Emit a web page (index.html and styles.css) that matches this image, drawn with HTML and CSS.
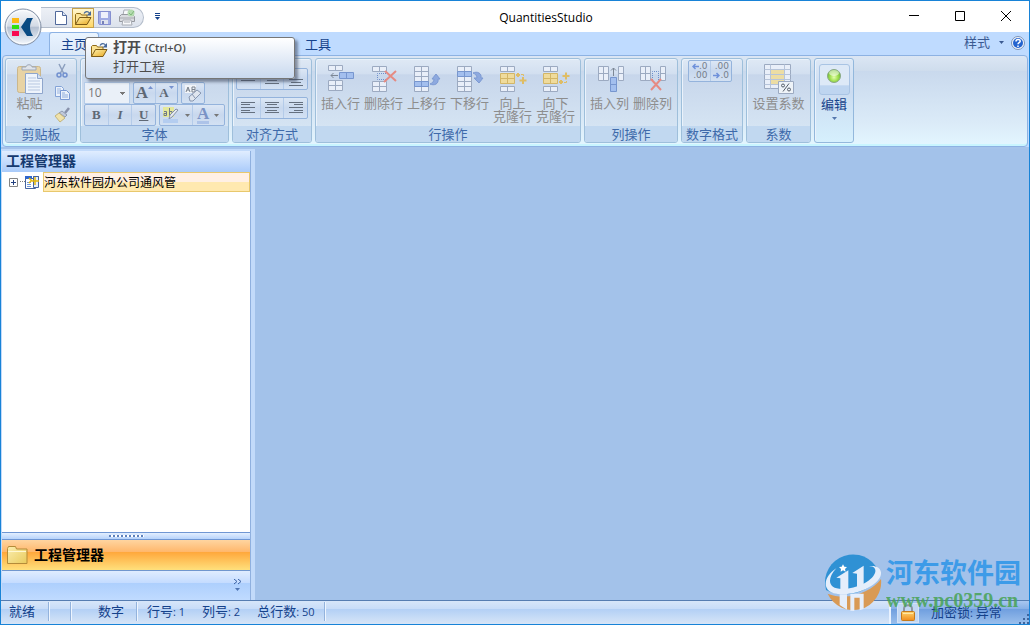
FILE: index.html
```html
<!DOCTYPE html>
<html lang="zh-CN">
<head>
<meta charset="utf-8">
<title>QuantitiesStudio</title>
<link rel="stylesheet" href="styles.css">
</head>
<body>
<svg class="defs" aria-hidden="true">
  <defs>
    <linearGradient id="folder" x1="0" y1="0" x2="1" y2="1"><stop offset="0" stop-color="#fff3b0"/><stop offset="1" stop-color="#e8a820"/></linearGradient>
    <linearGradient id="orb" x1="0" y1="0" x2="0" y2="1"><stop offset="0" stop-color="#f8fafc"/><stop offset=".48" stop-color="#d3dae5"/><stop offset=".5" stop-color="#b3bfd1"/><stop offset="1" stop-color="#f4f8fd"/></linearGradient>
    <radialGradient id="green" cx=".5" cy=".6" r=".6"><stop offset="0" stop-color="#e4ffae"/><stop offset=".5" stop-color="#a2e052"/><stop offset="1" stop-color="#61b324"/></radialGradient>
    <linearGradient id="gold" x1="0" y1="0" x2="0" y2="1"><stop offset="0" stop-color="#ffd56e"/><stop offset="1" stop-color="#f08c1c"/></linearGradient>
    <linearGradient id="big-folder" x1="0" y1="0" x2="1" y2="1"><stop offset="0" stop-color="#fbeeb0"/><stop offset="1" stop-color="#e9cb5c"/></linearGradient>
    <symbol id="open" viewBox="0 0 18 16">
      <path d="M1.500 14.500v-10l1-1h4l1 1.500h5.500v3" fill="#fbe394" stroke="#8f6a18"/>
      <path d="M1.500 14.500l4-7h11.500l-4 7z" fill="url(#folder)" stroke="#7c5a14"/>
      <path d="M10 3.500c1.500-2.500 4-2.500 5.500-.5" fill="none" stroke="#44679a" stroke-width="1.200"/>
      <path d="M17 1v4.500h-4.500z" fill="#44679a"/>
    </symbol>
    <symbol id="caret" viewBox="0 0 5 3"><path d="M0 0h5L2.500 3z" fill="currentColor"/></symbol>
  </defs>
</svg>

<div class="window">
  <header class="titlebar">
    <div class="quick">
      <div class="quick-bar">
        <button class="quick-btn" aria-label="新建"><svg width="14" height="16"><path d="M1.500 1.500h7l4 4v9h-11z" fill="#fff" stroke="#51699b"/><path d="M8.500 1.500v4h4" fill="#dce6f5" stroke="#51699b"/></svg></button>
        <button class="quick-btn active" aria-label="打开"><svg width="18" height="16"><use href="#open"/></svg></button>
        <button class="quick-btn" aria-label="保存"><svg width="16" height="16"><path d="M1.500 1.500h12v13h-11l-1-1z" fill="#a0abe3" stroke="#858fd0"/><path d="M4 2h7v6H4z" fill="#eef1fb"/><path d="M4 10h7v4H4z" fill="#dfe3ee"/><path d="M5 11h2v3H5z" fill="#7781b8"/></svg></button>
        <button class="quick-btn" aria-label="打印"><svg width="18" height="17"><path d="M5 6l1-5h6l1 5" fill="#f7f8fa" stroke="#a8acb4"/><path d="M1.500 7.500l2-2h11l2 2v5h-15z" fill="#d9dbe0" stroke="#96999f"/><path d="M2 9h14" stroke="#a6a9af"/><path d="M5 11h8l1 5H4z" fill="#f8f9fb" stroke="#a8acb4"/><path d="M6 13h6" stroke="#a8acb4"/><circle cx="13" cy="4" r="3.500" fill="#b4dbb0"/><path d="M11 4l2 2 3-4" fill="none" stroke="#7fb87c"/></svg></button>
      </div>
      <button class="quick-more" aria-label="自定义快速访问工具栏"><svg width="7" height="8"><path d="M1 .5h5M1 2.500h5" stroke="#15428b"/><path d="M1 4h5L3.500 7z" fill="#15428b"/></svg></button>
    </div>
    <h1 class="app-title">QuantitiesStudio</h1>
    <div class="controls">
      <button aria-label="最小化"><svg width="12" height="12"><path d="M1 4.500h10" stroke="#000"/></svg></button>
      <button aria-label="最大化"><svg width="12" height="12"><path d="M1.500.500h9v9h-9z" fill="none" stroke="#000"/></svg></button>
      <button aria-label="关闭"><svg width="12" height="12"><path d="M1 0l10 10M11 0L1 10" stroke="#000"/></svg></button>
    </div>
  </header>

  <nav class="tabs">
    <button class="tab selected">主页</button>
    <button class="tab">工具</button>
    <button class="style-menu">样式 <svg width="5" height="3"><use href="#caret"/></svg></button>
    <button class="help" aria-label="帮助"><svg width="14" height="14"><circle cx="7" cy="7" r="6.500" fill="#f2f6fc" stroke="#7c93b8"/><circle cx="7" cy="7" r="5" fill="#2463cf"/><path d="M5 5.500c0-2.600 4.200-2.600 4.200-.3C9.200 6.700 7 6.500 7 8.300M7 9.500v1.500" fill="none" stroke="#fff" stroke-width="1.500"/></svg></button>
  </nav>

  <section class="ribbon">
    <div class="group clipboard">
      <div class="tools">
        <button class="large">
          <svg width="28" height="30"><rect x="1.500" y="2.500" width="23" height="26" rx="2" fill="#e8d3a4" stroke="#cbb78c"/><path d="M6 6V3h4c0-3 6-3 6 0h4v3z" fill="#dfe3ea" stroke="#9ca7b8"/><path d="M9.500 9.500h12l5 5v15h-17z" fill="#eef4fc" stroke="#8fa6cc"/><path d="M21.500 9.500v5h5" fill="#d2dff2" stroke="#8fa6cc"/><path d="M12 14h8M12 17h12M12 20h12M12 23h12M12 26h12" stroke="#b7c7e1"/></svg>
          <span>粘贴</span><svg class="drop" width="5" height="3"><use href="#caret"/></svg>
        </button>
        <div class="small-stack">
          <button aria-label="剪切"><svg width="16" height="16"><path d="M5 1l5 10M11 1L6 11" stroke="#8d9fbe" stroke-width="1.500"/><circle cx="5" cy="12" r="2" fill="none" stroke="#7190cf" stroke-width="1.500"/><circle cx="11" cy="12" r="2" fill="none" stroke="#7190cf" stroke-width="1.500"/></svg></button>
          <button aria-label="复制"><svg width="16" height="16"><path d="M1.500 1.500h6l2 2v8h-8z" fill="#eaf1fb" stroke="#84a3d7"/><path d="M3 4h4M3 6h4M3 8h4" stroke="#9bb5df"/><path d="M6.500 5.500h6l3 3v6h-9z" fill="#eaf1fb" stroke="#7898d4"/><path d="M8 8h3M8 10h6M8 12h6" stroke="#8eabdc"/></svg></button>
          <button aria-label="格式刷"><svg width="16" height="16"><path d="M15 1l-4 5" stroke="#8892ac" stroke-width="2.500"/><path d="M8 4l5 4-2 2-6-4z" fill="#c0c9da" stroke="#8e9ab2"/><path d="M5 6l6 5-5 4-5-6z" fill="#f0e2a9" stroke="#c3b47c"/></svg></button>
        </div>
      </div>
      <h2>剪贴板</h2>
    </div>

    <div class="group font-group">
      <div class="tools rows">
        <div class="row">
          <select class="size" aria-label="字号"><option>10</option></select>
          <div class="btns"><button aria-label="增大字号"><b class="letter big">A</b><svg width="5" height="3"><path d="M0 3h5L2.500 0z" fill="#7792cf"/></svg></button><button aria-label="减小字号"><b class="letter">A</b><svg width="5" height="3"><path d="M0 0h5L2.500 3z" fill="#7792cf"/></svg></button></div>
          <div class="btns"><button aria-label="清除格式"><svg width="18" height="18"><rect x="1" y="1" width="11" height="8" fill="#f1f4f8"/><path d="M2 8l2-5 2 5M3 6h2M8 8V3h3v5H8M8 5.500h3" fill="none" stroke="#7a828d"/><path d="M5 13l8-7 4 3-8 8H6z" fill="#dfe5ee" stroke="#8796b0"/><path d="M8 10l3 4" stroke="#8796b0"/></svg></button></div>
        </div>
        <div class="row format">
          <div class="btns"><button><b>B</b></button><button><b><i>I</i></b></button><button><b><u>U</u></b></button></div>
          <div class="btns colors"><button aria-label="突出显示"><svg width="18" height="18"><rect x="1" y="1" width="11" height="10" fill="#e4e89a"/><path d="M2 5.500h2.500v4H2v-2h2.500M7.500 2v7.500H10v-4H7.500" fill="none" stroke="#6e7888"/><path d="M16 4l-6 7-3 2 1-4 6-6z" fill="#e6eaf0" stroke="#8591a7"/><path d="M1 15h15" stroke="#b4cdf0" stroke-width="4"/></svg><svg width="5" height="3"><use href="#caret"/></svg></button><button aria-label="字体颜色"><b class="letter blue">A</b><svg width="5" height="3"><use href="#caret"/></svg></button></div>
        </div>
      </div>
      <h2>字体</h2>
    </div>

    <div class="group align-group">
      <div class="tools rows">
        <div class="btns"><button aria-label="顶端对齐"><svg width="14" height="14"><path d="M0 2.500h14M2 5.500h10M0 8.500h14" stroke="#65707f"/></svg></button><button aria-label="垂直居中"><svg width="14" height="14"><path d="M0 5.500h14M2 8.500h10M0 11.500h14" stroke="#65707f"/></svg></button><button aria-label="底端对齐"><svg width="14" height="14"><path d="M0 7.500h14M2 10.500h10M0 13.500h14" stroke="#65707f"/></svg></button></div>
        <div class="btns"><button aria-label="左对齐"><svg width="14" height="14"><path d="M0 1.500h14M0 3.500h9M0 6.500h14M0 9.500h9M0 11.500h14" stroke="#65707f"/></svg></button><button aria-label="居中"><svg width="14" height="14"><path d="M0 1.500h14M2 3.500h10M0 6.500h14M2 9.500h10M0 11.500h14" stroke="#65707f"/></svg></button><button aria-label="右对齐"><svg width="14" height="14"><path d="M0 1.500h14M5 3.500h9M0 6.500h14M5 9.500h9M0 11.500h14" stroke="#65707f"/></svg></button></div>
      </div>
      <h2>对齐方式</h2>
    </div>

    <div class="group row-group">
      <div class="tools">
        <button class="large"><svg class="grid" width="28" height="30"><path d="M1.500 1.500h14v5h-14zM8.500 1.500v5M1.500 16.500h14v10h-14zM8.500 16.500v10M1.500 21.500h14"/><path class="fill-blue" d="M12.500 8.500h14v6h-14zM19.500 8.500v6"/><path class="arrow" d="M11 11.500H4M6.500 9L4 11.500 6.500 14"/></svg><span>插入行</span></button>
        <button class="large"><svg class="grid" width="28" height="30"><path d="M2.500 2.500h14v5h-14zM9.500 2.500v5M2.500 17.500h14v10h-14zM9.500 17.500v10M2.500 22.500h14"/><path class="dotted" d="M16 9.500H7.500v6H16"/><path class="cross" d="M15 7l11 10M26 7L14 18"/></svg><span>删除行</span></button>
        <button class="large"><svg class="grid" width="28" height="30"><path d="M1.500 2.500h14v25h-14zM8.500 2.500v25M1.500 7.500h14M1.500 12.500h14M1.500 22.500h14"/><path class="fill-blue" d="M1.500 17.500h14v5h-14zM8.500 17.500v5"/><path class="curve" d="M17 20c4 2 9 0 8-5h2l-4-5-4 5h2c0 3-2 4-4 5z"/></svg><span>上移行</span></button>
        <button class="large"><svg class="grid" width="28" height="30"><path d="M1.500 2.500h14v25h-14zM8.500 2.500v25M1.500 12.500h14M1.500 17.500h14M1.500 22.500h14"/><path class="fill-blue" d="M1.500 7.500h14v5h-14zM8.500 7.500v5"/><path class="curve" d="M17 9c4-2 9 0 8 5h2l-4 5-5-5h3c0-3-2-4-4-5z"/></svg><span>下移行</span></button>
        <button class="large"><svg class="grid" width="28" height="30"><path d="M1.500 2.500h14v5h-14zM8.500 2.500v5M1.500 22.500h14v5h-14zM8.500 22.500v5"/><path class="fill-gold" d="M1.500 9.500h14v10h-14zM8.500 9.500v10M1.500 14.500h14"/><path class="plus" d="M17 11h4M19 9v4M24 13v7M20.500 16.500h7"/><path class="link" d="M22 10.500h2.500V12"/></svg><span>向上<br>克隆行</span></button>
        <button class="large"><svg class="grid" width="28" height="30"><path d="M1.500 2.500h14v5h-14zM8.500 2.500v5M1.500 22.500h14v5h-14zM8.500 22.500v5"/><path class="fill-gold" d="M1.500 9.500h14v10h-14zM8.500 9.500v10M1.500 14.500h14"/><path class="plus" d="M17 18h4M19 16v4M24 8.500v7M20.500 12h7"/><path class="link" d="M22 18.500h2.500V17"/></svg><span>向下<br>克隆行</span></button>
      </div>
      <h2>行操作</h2>
    </div>

    <div class="group column-group">
      <div class="tools">
        <button class="large"><svg class="grid" width="28" height="30"><path d="M2.500 2.500h10v14h-10zM7.500 2.500v14M2.500 9.500h10M22.500 2.500h5v14h-5zM22.500 9.500h5"/><path class="fill-blue" d="M14.500 13.500h6v14h-6zM14.500 20.500h6"/><path class="arrow" d="M17.500 12V4M15 6.500L17.500 4 20 6.500"/></svg><span>插入列</span></button>
        <button class="large"><svg class="grid" width="28" height="30"><path d="M1.500 2.500h10v14h-10zM6.500 2.500v14M1.500 9.500h10M21.500 2.500h5v14h-5zM21.500 9.500h5"/><path class="dotted" d="M13.500 16V7.500h6V16"/><path class="cross" d="M12 15l10 11M22 15L12 26"/></svg><span>删除列</span></button>
      </div>
      <h2>列操作</h2>
    </div>

    <div class="group number-group">
      <div class="tools rows">
        <div class="btns"><button class="digits" aria-label="增加小数位数"><span><svg width="7" height="7"><path d="M7 3.500H1M3.500 1L1 3.500 3.500 6" fill="none" stroke="#6f91da" stroke-width="1.500"/></svg>.0</span><span>.00</span></button><button class="digits" aria-label="减少小数位数"><span>.00</span><span><svg width="7" height="7"><path d="M0 3.500h6M3.500 1L6 3.500 3.500 6" fill="none" stroke="#6f91da" stroke-width="1.500"/></svg>.0</span></button></div>
      </div>
      <h2>数字格式</h2>
    </div>

    <div class="group factor-group">
      <div class="tools">
        <button class="large"><svg class="grid" width="30" height="30"><path d="M.5.500h26v24H.5z"/><path d="M7 5h13v15H7z" fill="#ecdda4" stroke="none"/><path d="M6.500.500v24M20.500.500v24M.5 5.500h26M.5 10.500h26M.5 15.500h26M.5 20.500h26" stroke="#b6c4da"/><path d="M14.500 17.500h15v12h-15z" fill="#eef3f8"/><path d="M25 19.500l-6 8" stroke="#555d68"/><circle cx="19" cy="21.500" r="1.500" fill="none" stroke="#555d68"/><circle cx="25" cy="25.500" r="1.500" fill="none" stroke="#555d68"/></svg><span>设置系数</span></button>
      </div>
      <h2>系数</h2>
    </div>

    <div class="group edit-group">
      <button class="large enabled"><span class="orb-box"><svg width="16" height="16"><circle cx="8" cy="8" r="6.500" fill="url(#green)" stroke="#8ba889"/><ellipse cx="8" cy="5" rx="5" ry="3" fill="#fff" opacity=".55"/></svg></span><span>编辑</span><svg class="drop" width="5" height="3"><use href="#caret"/></svg></button>
    </div>
  </section>

  <div class="workspace">
    <aside class="sidebar">
      <h2 class="panel-title">工程管理器</h2>
      <div class="tree">
        <div class="node">
          <button class="expander" aria-label="展开"><svg width="9" height="9"><path d="M.5.500h8v8h-8z" fill="#fff" stroke="#848484"/><path d="M2 4.500h5M4.500 2v5" stroke="#24417f"/></svg></button>
          <svg width="6" height="2"><path d="M1 .5h5" stroke="#808080" stroke-dasharray="1 1"/></svg>
          <svg width="15" height="14"><path d="M.5 3.500h10v10H.5z" fill="#fff" stroke="#44639f"/><path d="M0 1h7v3H0zM8 1h6v2H8z" fill="#2f66cc"/><path d="M8.500 1.500h5v11h-5z" fill="#e7f0fc" stroke="#44639f"/><path d="M2 7.500h4M2 9.500h4M2 11.500h4" stroke="#6e96d8"/><path d="M10 2v8M7 6h7M4 3l3 3M4 8l3-3" stroke="#e3b60c" stroke-width="1.500"/></svg>
          <a href="#project" class="node-name">河东软件园办公司通风管</a>
        </div>
      </div>
      <div class="grip"><i></i></div>
      <button class="nav-item"><svg width="22" height="20"><path d="M1.500 18.500V3.500l1-2h7l1 2.500h10.500v14.500z" fill="url(#big-folder)" stroke="#b48b39"/><path d="M2 6.500h18" stroke="#fff8d2"/></svg>工程管理器</button>
      <div class="nav-foot"><button aria-label="配置按钮"><svg width="9" height="14"><path d="M1 0l3 2.500L1 5M5 0l3 2.500L5 5" fill="none" stroke="#3a62a4"/><path d="M2 9h5l-2.500 3z" fill="#5075b2"/></svg></button></div>
    </aside>
    <main class="canvas"></main>
  </div>

  <footer class="status">
    <span class="cell ready">就绪</span><span class="cell blank"></span><span class="cell mode">数字</span>
    <span class="cell counts"><span>行号<small>: 1</small></span><span>列号<small>: 2</small></span><span>总行数<small>: 50</small></span></span>
    <span class="lock">
      <span class="lock-icon"><svg width="16" height="17"><path d="M4 8V5c0-5 8-5 8 0v3" fill="none" stroke="#8b95a4" stroke-width="2"/><rect x="1.500" y="7.500" width="13" height="9" rx="1" fill="url(#gold)" stroke="#c57a1c"/><path d="M3 9.500h10" stroke="#ffe6a3"/></svg></span>
      <span>加密锁<small>: </small>异常</span>
      <svg class="resize" width="11" height="11"><path d="M9 1h2v2H9zM5 5h2v2H5zM9 5h2v2H9zM1 9h2v2H1zM5 9h2v2H5zM9 9h2v2H9z" fill="#40659c"/></svg>
    </span>
  </footer>

  <button class="app-button" aria-label="应用程序菜单"><svg width="38" height="38"><circle cx="19" cy="19" r="18" fill="url(#orb)" stroke="#8390a5"/><circle cx="19" cy="19" r="16.500" fill="none" stroke="#fff" opacity=".7"/><path d="M8 10h7v5H8z" fill="#fdb813"/><path d="M8 17h7v4H8z" fill="#2edf12"/><path d="M8 23h7v5H8z" fill="#f8084f"/><path d="M23 10h6c-4 6-4 12 0 18h-6l-6-9z" fill="#0a4a82"/></svg></button>

  <div class="tooltip" role="tooltip">
    <svg width="18" height="16"><use href="#open"/></svg>
    <div><strong>打开 <small>(Ctrl+O)</small></strong><p>打开工程</p></div>
  </div>

  <div class="watermark">
    <svg width="58" height="58" viewBox="-3 -3 174 174">
      <path d="M0 84a84 84 0 0 1 165-24C140 110 60 135 3 105z" fill="#2f91d4"/>
      <path d="M8 116C70 140 140 110 168 72A84 84 0 0 1 8 116z" fill="#d99a55"/>
      <path d="M34 40C-10 68-12 118 50 118 110 118 172 82 168 52c-2-16-20-22-36-18 16-1 22 8 18 20-10 26-56 46-94 48-48 2-52-30-22-62z" fill="#e5eefb"/>
      <path d="M34 68l36-22v62H46V70zM82 54l34-22v58l-20 8V56zM44 118h22v46l-22-14zM76 116h40v46l-12 4v-38H88v40l-12-1z" fill="#e5eefb"/>
      <path d="M54 28l4 7 8 1-6 6 2 8-8-4-7 4 1-8-6-6 8-1z" fill="#fff"/>
    </svg>
    <div><strong>河东软件园</strong><span>www.pc0359.cn</span></div>
  </div>
</div>
</body>
</html>
```
FILE: styles.css
```css
* { box-sizing: border-box; }
body { margin: 0; font: 13px/16px "Open Sans", "Noto Sans CJK SC", sans-serif; color: #15428b; }
h1, h2, p { margin: 0; font-weight: 400; }
button { padding: 0; border: 0; background: none; color: inherit; font: inherit; }
svg { display: block; flex: none; }
.defs { position: absolute; width: 0; height: 0; }

.window { position: relative; display: flex; flex-direction: column; min-height: 100vh; border: 1px solid #1883d7; background: #bfdbff; overflow: hidden; }

.titlebar { display: grid; grid-template-columns: 200px 1fr 138px; align-items: center; height: 31px; background: #fff; }
.quick { display: flex; align-items: center; gap: 10px; padding-left: 40px; }
.quick-bar { display: flex; align-items: center; padding: 0 5px 0 9px; height: 21px; margin-top: 2px; border: 1px solid #b3bcca; border-left: 0; border-radius: 0 11px 11px 0; background: linear-gradient(#edf0f6, #dce2ec); }
.quick-btn { display: grid; place-items: center; width: 22px; height: 20px; }
.quick-btn.active { border: 1px solid #c4a04a; background: linear-gradient(#fff6cf, #ffd766); }
.app-title { font-size: 12px; color: #000; padding-top: 2px; text-align: center; }
.controls { display: flex; justify-content: flex-end; }
.controls button { display: grid; place-items: center; width: 46px; height: 28px; }

.tabs { display: flex; align-items: center; height: 23px; padding: 0 4px 0 48px; }
.tab { height: 23px; width: 50px; margin-right: 194px; }
.tab + .tab { margin-right: auto; }
.tab.selected { align-self: flex-start; border: 1px solid #8db2e3; border-bottom: 0; border-radius: 3px 3px 0 0; background: linear-gradient(#eaf4ff, #dbe8f7); }
.style-menu { display: flex; align-items: center; gap: 9px; padding-bottom: 3px; margin-right: 7px; color: #3b5a92; }
.help { padding-bottom: 2px; }

.ribbon { display: flex; gap: 3px; height: 92px; margin: 0 1px; padding: 3px 2px 4px; border: 1px solid #8db2e3; border-radius: 4px; background: linear-gradient(#dbe6f4, #cfdded 16%, #c9d9ed 17%, #dbebf8 75%, #e3f6ff); color: #8d8d8d; box-shadow: inset 0 -2px #c9f5ff; }
.group { display: flex; flex-direction: column; height: 85px; margin-top: -1px; border: 1px solid #9ebfdb; border-radius: 3px; background: linear-gradient(#dfe9f5, #d2dff0 18%, #c7d6eb 19%, #d9e8f5); box-shadow: inset 1px 1px #eaf2fb; overflow: hidden; }
.group h2 { margin-top: auto; height: 16px; font-size: 13px; line-height: 16px; text-align: center; background: #c1d8f0; color: #3e6aaa; white-space: nowrap; }
.tools { display: flex; padding: 0 3px; }
.clipboard .tools { padding: 0 3px 0 2px; }
.clipboard { width: 72px; }
.font-group { width: 149px; }
.align-group { width: 80px; }
.row-group { width: 266px; }
.column-group { width: 94px; }
.number-group { width: 62px; }
.factor-group { width: 65px; }
.edit-group { width: 40px; }

.large { display: flex; flex-direction: column; align-items: center; width: 43px; padding-top: 5px; line-height: 13px; white-space: nowrap; }
.large > span { margin-top: 3px; text-align: center; }
.large .drop { margin-top: 6px; color: #777; }
.factor-group .large { width: 100%; }
.small-stack { display: flex; flex-direction: column; padding-top: 1px; }
.small-stack button { display: grid; place-items: center; width: 22px; height: 22px; }
.edit-group { border-color: #93b8dc; background: linear-gradient(#dce8f6, #cbdcf1 40%, #d6f0fd); }
.edit-group .large { width: 100%; color: #15428b; }
.edit-group .drop { color: #5577ad; }
.edit-group .orb-box { display: grid; place-items: start center; width: 31px; height: 31px; margin: 0; padding-top: 3px; border: 1px solid #a9c4e4; border-radius: 3px; background: linear-gradient(#dde9f7 70%, #bed5f0 71%); }

.grid { fill: #e9eff9; stroke: #9caac1; }
.grid .fill-blue { fill: #a3bfee; stroke: #7796cf; }
.grid .fill-gold { fill: #efdb9c; stroke: #d3b667; }
.grid .arrow { fill: none; stroke: #7c8795; stroke-width: 1; }
.grid .dotted { fill: none; stroke: #6e8fca; stroke-dasharray: 1 1; }
.grid .cross { fill: none; stroke: #e58b83; stroke-width: 2; }
.grid .curve { fill: #8da9df; stroke: #7d9ad3; }
.grid .plus { fill: none; stroke: #dfbd65; stroke-width: 2; }
.grid .link { fill: none; stroke: #dfbd65; }

.rows { flex-direction: column; }
.row { display: flex; gap: 3px; }
.btns { display: flex; height: 22px; border: 1px solid #94b3dc; border-radius: 2px; background: linear-gradient(#dce7f5, #c8d8ee 50%, #d3e1f3); }
.btns button { flex: 1; display: flex; align-items: center; justify-content: center; }
.btns button + button { border-left: 1px solid #b4cbe9; }
.font-group .tools { padding-top: 23px; }
.size { width: 46px; height: 22px; padding: 0 3px; border: 1px solid #b5cce9; border-radius: 0; appearance: none; color: #777; font: inherit; font-size: 12px; background: linear-gradient(#777, #777) 35px 9px / 5px 1px no-repeat, linear-gradient(#777, #777) 36px 10px / 3px 1px no-repeat, linear-gradient(#777, #777) 37px 11px / 1px 1px no-repeat, #eaf0f8; }
.row > .btns { width: 45px; }
.row > .btns:last-child { width: 24px; }
.letter { font: bold 13px/18px "Liberation Serif", serif; color: #5e6875; }
.letter.big { font-size: 17px; }
.letter + svg { align-self: flex-start; margin-top: 3px; }
.format { font: bold 13px/18px "Liberation Serif", serif; color: #5e6875; }
.row.format > .btns { width: 72px; }
.row.format > .btns.colors { width: 66px; }
.colors button { gap: 5px; color: #777; }
.letter.blue { font-size: 17px; color: #7a93c5; border-bottom: 3px solid #adc3e8; line-height: 14px; }
.colors .letter + svg { align-self: center; margin-top: 0; }
.align-group .rows { gap: 7px; padding: 9px 3px 0 3px; }
.number-group .rows { padding: 1px 10px 0 6px; }
.digits { flex-direction: column; font: 9px/9px "DejaVu Sans", sans-serif; color: #77808c; }
.digits span { display: flex; align-items: center; }
.btns .digits { align-items: flex-end; padding-right: 2px; }

.workspace { flex: 1; display: flex; padding: 4px 0 0 1px; min-height: 0; background: linear-gradient(#a5c3ea, #a5c3ea) 0 0 / 100% 2px no-repeat, #c2dafa; }
.sidebar { display: flex; flex-direction: column; width: 249px; margin-right: 4px; border-right: 1px solid #8fb0df; }
.panel-title { height: 21px; padding: 1px 4px; font-size: 14px; line-height: 18px; font-weight: 700; color: #15396f; background: linear-gradient(#e0edff, #aacbfa); }
.tree { flex: 1; background: #fff; }
.node { display: flex; align-items: center; padding-left: 7px; }
.node > svg + svg { margin: 0 3px 0 0; }
.expander { margin-right: 1px; }
.node-name { flex: 1; height: 20px; border: 1px solid #e8c86d; font-size: 12px; line-height: 19px; color: #000; text-decoration: none; background: linear-gradient(#fff0e5 50%, #ffe9b0 51%); }
.grip { display: grid; place-items: center; height: 8px; border: 1px solid #6f96d3; border-width: 1px 0; background: linear-gradient(#e3efff, #b7d3fb); }
.grip i { width: 35px; height: 2px; background: repeating-linear-gradient(90deg, #5d81bc 0 2px, #fff 2px 4px); }
.nav-item { display: flex; align-items: center; gap: 6px; height: 31px; padding-left: 4px; border-bottom: 1px solid #7197ce; background: linear-gradient(#ffd5a0, #ffb76b 40%, #ffa83c 41%, #ffe07c); font-size: 14px; font-weight: 700; color: #000; }
.nav-foot { display: flex; justify-content: flex-end; align-items: center; height: 29px; padding-right: 8px; background: linear-gradient(#e0edff, #c5dcff 40%, #adcffd 41%, #c0dbff); }
.canvas { flex: 1; margin-top: -2px; background: #a3c2ea; }

.status { display: flex; height: 24px; border-top: 1px solid #567db1; line-height: 18px; background: linear-gradient(#d7e6f9, #c7dcf8 35%, #b3d0f5 36%, #d7e5f7); }
.status small { font-size: 11px; }
.cell { border-right: 1px solid #93b3dd; box-shadow: 1px 0 #edf5ff; margin: 1px 0 3px; }
.ready { width: 48px; padding-left: 8px; }
.blank { width: 22px; }
.mode { width: 66px; padding-left: 27px; }
.counts { display: flex; gap: 17px; padding: 0 10px; }
.lock { display: flex; align-items: center; width: 140px; margin-left: auto; padding: 0 0 0 6px; border-left: 2px solid #e9f2ff; background: linear-gradient(#a9c7f0, #86afe6 35%, #709fdf 36%, #9abfec); }
.lock-icon { display: grid; place-items: center; width: 22px; height: 20px; margin-right: 12px; border: 1px solid #d3e2f7; background: #c1d7f3; }
.resize { align-self: flex-end; margin-left: auto; }

.app-button { position: absolute; left: 3px; top: 7px; }
.tooltip { position: absolute; left: 84px; top: 36px; display: flex; gap: 5px; width: 210px; height: 42px; padding: 0 4px; border: 1px solid #767676; border-radius: 3px; background: linear-gradient(#fff, #c9d9ef); box-shadow: 3px 3px 3px rgba(60, 70, 90, .55); color: #4c4c4c; line-height: 18px; }
.tooltip > svg { margin-top: 4px; }
.tooltip strong { font-size: 14px; }
.tooltip small { font-size: 11px; font-weight: 600; }
.watermark { position: absolute; right: 8px; bottom: 12px; display: flex; gap: 4px; pointer-events: none; }
.watermark > svg { margin-top: -1px; }
.watermark strong, .watermark span { display: block; white-space: nowrap; }
.watermark strong { font: 700 27px/34px "Noto Sans CJK SC", sans-serif; color: #3d9be8; }
.watermark span { font: 700 20px/22px "Liberation Serif", serif; color: #48a355; opacity: .85; }
```
